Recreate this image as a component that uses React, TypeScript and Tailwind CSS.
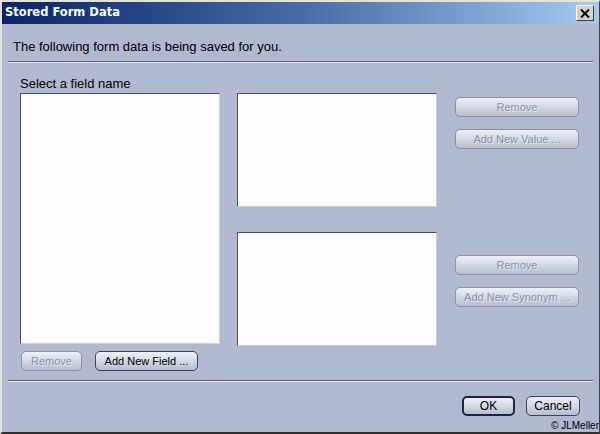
import React from "react";

function Btn({
  label,
  disabled,
  primary,
  className,
}: {
  label: string;
  disabled?: boolean;
  primary?: boolean;
  className?: string;
}) {
  const border = primary
    ? "border-2 border-[#1f2640]"
    : disabled
      ? "border border-[#8a91a6]"
      : "border border-[#3c4358]";
  const text = disabled ? "text-[#8b93a8] [text-shadow:1px_1px_0_#e4e8f0]" : "text-black";
  return (
    <div
      className={`h-[20px] rounded-[5px] bg-gradient-to-b from-[#eef0f5] via-[#d3d8e3] to-[#b6bdcf] flex items-center justify-center text-[11px] leading-none ${border} ${text} ${className ?? ""}`}
    >
      {label}
    </div>
  );
}

function ListBox({ className }: { className?: string }) {
  return (
    <div
      className={`bg-[#fffbff] border-t border-l border-[#4a5064] border-r border-b border-r-[#c8cede] border-b-[#c8cede] ${className ?? ""}`}
    />
  );
}

export default function App() {
  return (
    <div
      className="w-[600px] h-[434px] bg-[#b1b9d1] flex flex-col border-l-2 border-t-2 border-[#e4e2dc] border-r border-b-2 border-r-[#404040] border-b-[#303030] overflow-hidden"
      style={{ fontFamily: '"Liberation Sans", Arial, sans-serif' }}
    >
      {/* title bar */}
      <div className="h-[22px] bg-gradient-to-r from-[#0a246a] via-[#4a6aa6] to-[#a6caf0] flex items-center justify-between pl-[3px] pr-[5px]">
        <span
          className="text-white text-[11.5px] font-bold"
          style={{ fontFamily: '"DejaVu Sans", Verdana, sans-serif' }}
        >
          Stored Form Data
        </span>
        <div className="w-[18px] h-[16px] bg-[#d4d0c8] border border-t-white border-l-white border-r-[#404040] border-b-[#404040] flex items-center justify-center">
          <svg width="10" height="9" viewBox="0 0 10 9">
            <path d="M1 0.5 L9 8.5 M9 0.5 L1 8.5" stroke="#000" strokeWidth="2" />
          </svg>
        </div>
      </div>

      {/* body */}
      <div className="flex-1 flex flex-col px-[6px]">
        <p className="mt-[16px] pl-[5px] text-[13px] text-black leading-[14px]">
          The following form data is being saved for you.
        </p>
        <div className="mt-[7px] border-t border-[#5a6276] border-b border-b-[#e2e6f0]" />

        <div className="flex pl-[12px] mt-[14px]">
          {/* field column */}
          <div className="w-[200px] flex flex-col">
            <span className="text-[13px] leading-[14px] text-black">Select a field name</span>
            <ListBox className="h-[251px] mt-[2px]" />
            <div className="flex mt-[7px] pl-[1px]">
              <Btn label="Remove" disabled className="w-[61px]" />
              <Btn label="Add New Field ..." className="w-[103px] ml-[13px]" />
            </div>
          </div>

          {/* values / synonyms */}
          <div className="w-[200px] ml-[17px] mt-[16px] flex flex-col">
            <ListBox className="h-[114px]" />
            <ListBox className="h-[114px] mt-[25px]" />
          </div>

          {/* right buttons */}
          <div className="w-[124px] ml-[18px] mt-[20px] flex flex-col">
            <Btn label="Remove" disabled />
            <Btn label="Add New Value ..." disabled className="mt-[12px]" />
            <Btn label="Remove" disabled className="mt-[106px]" />
            <Btn label="Add New Synonym ..." disabled className="mt-[12px]" />
          </div>
        </div>

        <div className="mt-[9px] border-t border-[#5a6276] border-b border-b-[#e2e6f0]" />

        <div className="flex justify-end mt-[14px] pr-[13px]">
          <Btn label="OK" primary className="w-[53px] text-[12px]" />
          <Btn label="Cancel" className="w-[54px] ml-[11px] text-[12px]" />
        </div>
        <div className="flex justify-end mt-[4px] -mr-[6px]">
          <span className="text-[10px] leading-[12px] text-black">© JLMeller</span>
        </div>
      </div>
    </div>
  );
}
